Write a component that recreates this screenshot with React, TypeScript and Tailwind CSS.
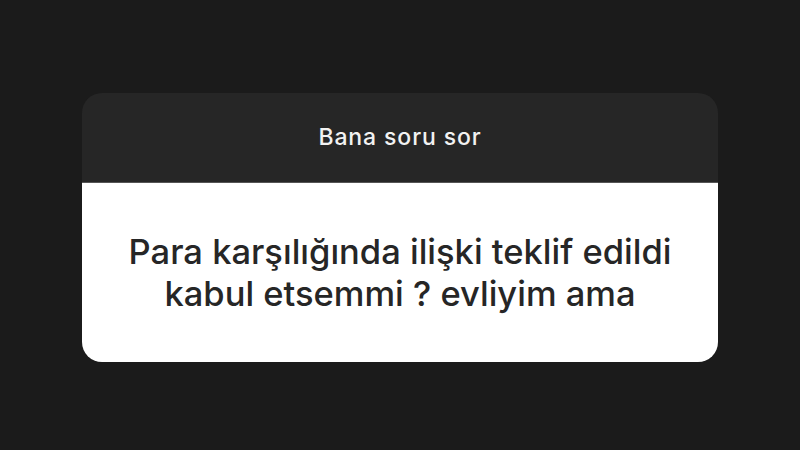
export default function App() {
  return (
    <div className="w-[800px] h-[450px] bg-[#1b1b1b] flex items-start justify-center pt-[93px]" style={{ fontFamily: "Inter, 'Noto Sans', sans-serif" }}>
      <div className="w-[636px] rounded-[20px] overflow-hidden flex flex-col">
        <div className="h-[90px] bg-[#262626] flex items-center justify-center border-b border-[#555]">
          <span className="text-[23px] text-[#f2f2f2] font-medium tracking-[0.9px]">Bana soru sor</span>
        </div>
        <div className="h-[179px] bg-white flex items-center justify-center">
          <p className="text-[34.5px] leading-[42px] text-[#262626] text-center font-medium">
            Para karşılığında ilişki teklif edildi<br />kabul etsemmi ? evliyim ama
          </p>
        </div>
      </div>
    </div>
  );
}
